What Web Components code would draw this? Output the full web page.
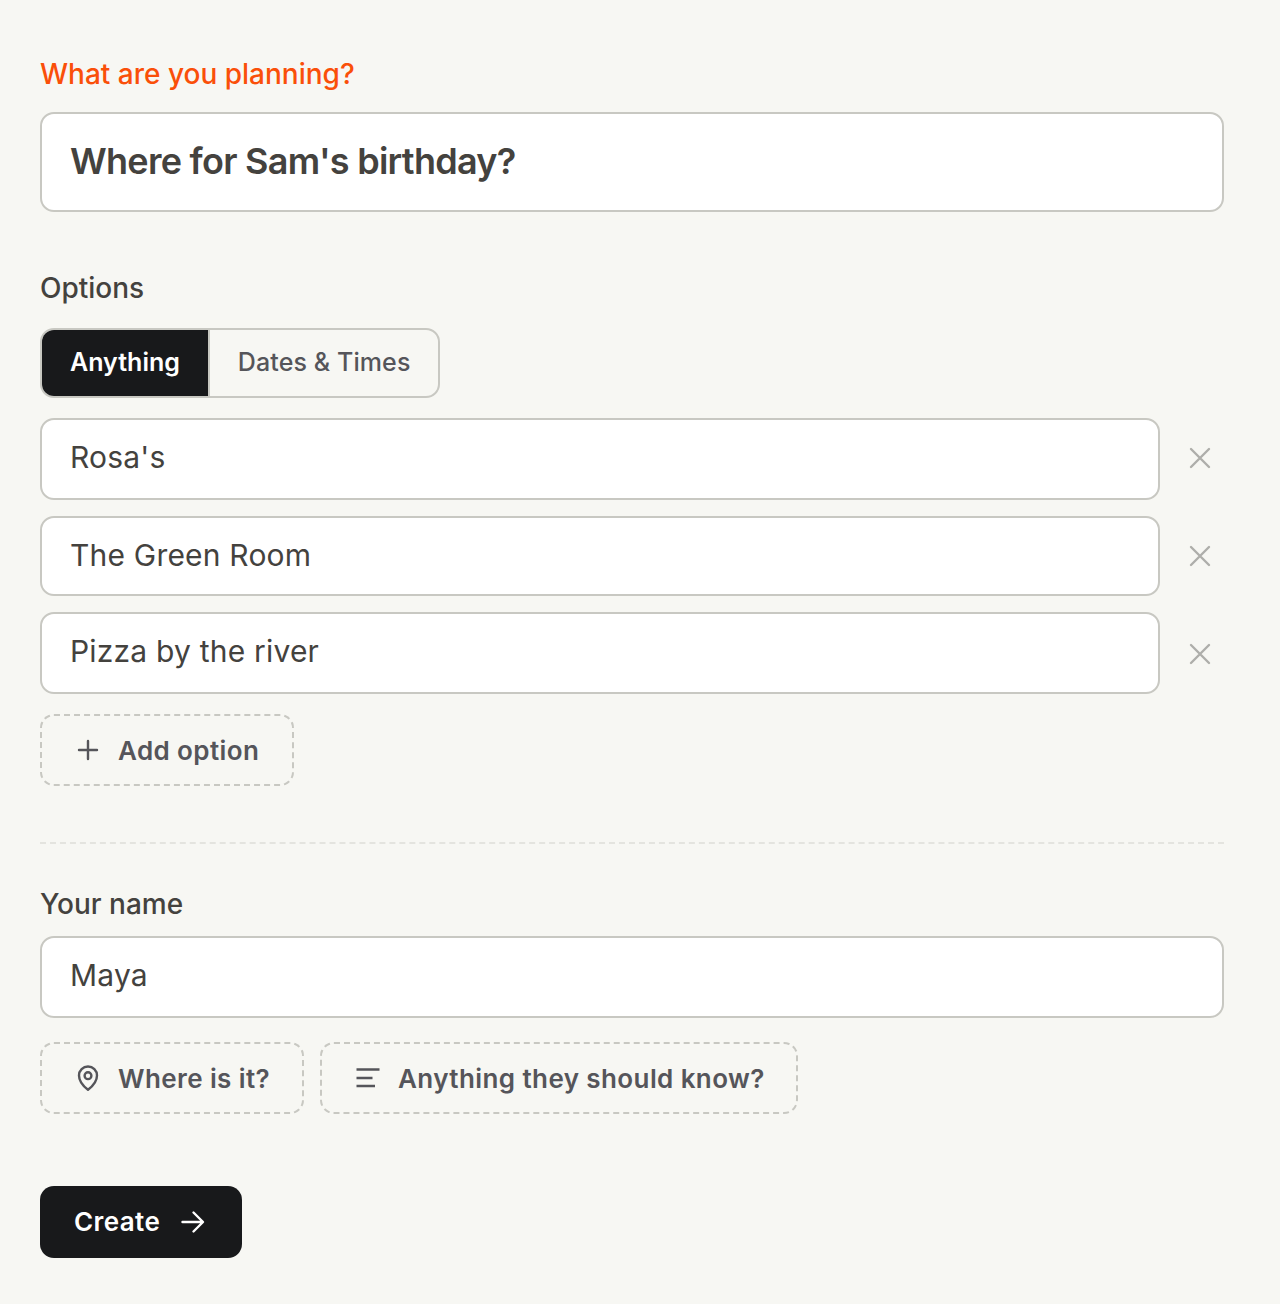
<!DOCTYPE html>
<html lang="en">
<head>
<meta charset="utf-8">
<title>Create poll</title>
<style>
  html, body { margin: 0; background: #f7f7f3; }
  body { font-family: Inter, "Liberation Sans", sans-serif; color: #44423e; }
</style>
</head>
<body>

<template id="tpl-form">
  <style>
    :host { display: block; box-sizing: border-box; width: 1280px; height: 1304px; padding: 56px 56px 0 40px; }
  </style>
  <slot></slot>
</template>

<template id="tpl-label">
  <style>
    :host { display: block; font-size: 28px; line-height: 36px; font-weight: 500; color: #44423e; margin-bottom: 20px; }
    :host([accent]) { color: #fa4f09; }
  </style>
  <slot></slot>
</template>

<template id="tpl-field">
  <style>
    :host { display: block; box-sizing: border-box; flex: 1; height: 82px; background: #fff; border: 2px solid #c8c8c2; border-radius: 14px; padding: 0 28px 4px; font-size: 30px; letter-spacing: 0.2px; color: #44423e; }
    :host([big]) { height: 100px; padding-bottom: 2px; font-size: 36px; font-weight: 600; letter-spacing: -0.72px; }
    .t { display: flex; align-items: center; height: 100%; }
  </style>
  <div class="t"><slot></slot></div>
</template>

<template id="tpl-tabs">
  <style>
    :host { display: inline-flex; box-sizing: border-box; height: 70px; border: 2px solid #c8c8c2; border-radius: 14px; overflow: hidden; vertical-align: top; }
  </style>
  <slot></slot>
</template>

<template id="tpl-tab">
  <style>
    :host { display: flex; align-items: center; padding: 0 28px 2px; font-size: 25px; font-weight: 500; letter-spacing: 0.1px; color: #55555a; }
    :host([active]) { background: #18191b; color: #fff; font-weight: 600; letter-spacing: 0; }
    :host(:not([active])) { border-left: 2px solid #c8c8c2; }
  </style>
  <slot></slot>
</template>

<template id="tpl-row">
  <style>
    :host { display: flex; align-items: center; }
    button { all: unset; display: flex; justify-content: center; box-sizing: border-box; width: 64px; padding-left: 16px; padding-bottom: var(--up, 0); padding-top: var(--down, 0); flex: none; color: #aeaeaa; }
    svg { width: 24px; height: 24px; display: block; }
  </style>
  <slot></slot>
  <button aria-label="Remove">
    <svg viewBox="0 0 24 24" fill="none" stroke="currentColor" stroke-width="2.4" stroke-linecap="round"><path d="M3 3l18 18M21 3L3 21"/></svg>
  </button>
</template>

<template id="tpl-dashed">
  <style>
    :host { display: inline-flex; box-sizing: border-box; align-items: center; gap: 18px; height: 72px; padding: 0 32px 0 34px; border: 2px dashed #c8c8c2; border-radius: 14px; font-size: 26px; font-weight: 600; letter-spacing: 0.4px; color: #55555a; vertical-align: top; }
    ::slotted(svg) { display: block; width: 24px; height: 28px; flex: none; }
  </style>
  <slot name="icon"></slot>
  <slot></slot>
</template>

<template id="tpl-submit">
  <style>
    :host { display: inline-flex; box-sizing: border-box; align-items: center; gap: 20px; height: 72px; padding: 0 36px 2px 34px; background: #18191b; border-radius: 14px; font-size: 26px; font-weight: 600; letter-spacing: 0.4px; color: #fff; vertical-align: top; }
    svg { display: block; width: 26px; height: 26px; margin-top: 2px; }
  </style>
  <slot></slot>
  <svg viewBox="0 0 26 26" fill="none" stroke="currentColor" stroke-width="2.4" stroke-linecap="round" stroke-linejoin="round"><path d="M2.500 13h20M13.500 3.500l9.500 9.500-9.500 9.500"/></svg>
</template>

<poll-form>
  <form-label accent>What are you planning?</form-label>
  <text-field big>Where for Sam's birthday?</text-field>

  <form-label style="margin-top:58px;margin-bottom:22px">Options</form-label>
  <seg-tabs>
    <seg-tab active>Anything</seg-tab>
    <seg-tab>Dates &amp; Times</seg-tab>
  </seg-tabs>

  <div style="display:flex;flex-direction:column;margin-top:20px">
    <option-row style="--up:2px"><text-field>Rosa's</text-field></option-row>
    <option-row style="margin-top:16px"><text-field style="height:80px;padding-bottom:2px">The Green Room</text-field></option-row>
    <option-row style="margin-top:16px;--down:2px"><text-field>Pizza by the river</text-field></option-row>
  </div>

  <div style="margin-top:20px">
    <dashed-button style="padding-right:33px">
      <svg slot="icon" viewBox="0 0 24 28" fill="none" stroke="currentColor" stroke-width="2.4" stroke-linecap="round"><path d="M12 5v18M3 14h18"/></svg>
      Add option
    </dashed-button>
  </div>

  <div style="border-top:2px dashed #e4e4df;margin:56px 0 42px"></div>

  <form-label style="margin-bottom:14px">Your name</form-label>
  <text-field>Maya</text-field>

  <div style="display:flex;gap:16px;margin-top:24px">
    <dashed-button>
      <svg slot="icon" viewBox="0 0 24 28" fill="none" stroke="currentColor" stroke-width="2.4" stroke-linejoin="round"><path d="M12 25.800C9 23.500 3 18 3 11.500a9 9 0 0 1 18 0C21 18 15 23.500 12 25.800z"/><circle cx="12" cy="11.700" r="3.400"/></svg>
      Where is it?
    </dashed-button>
    <dashed-button style="padding-right:31px">
      <svg slot="icon" viewBox="0 0 24 28" fill="none" stroke="currentColor" stroke-width="2.400"><path d="M.5 5.500h23M.5 14h16M.5 22h18.500"/></svg>
      Anything they should know?
    </dashed-button>
  </div>

  <div style="margin-top:72px">
    <submit-button>Create</submit-button>
  </div>
</poll-form>

<script>
  function define(name, tplId) {
    const tpl = document.getElementById(tplId);
    customElements.define(name, class extends HTMLElement {
      constructor() {
        super();
        this.attachShadow({mode: 'open'}).append(tpl.content.cloneNode(true));
      }
    });
  }
  define('poll-form', 'tpl-form');
  define('form-label', 'tpl-label');
  define('text-field', 'tpl-field');
  define('seg-tabs', 'tpl-tabs');
  define('seg-tab', 'tpl-tab');
  define('option-row', 'tpl-row');
  define('dashed-button', 'tpl-dashed');
  define('submit-button', 'tpl-submit');
</script>
</body>
</html>
